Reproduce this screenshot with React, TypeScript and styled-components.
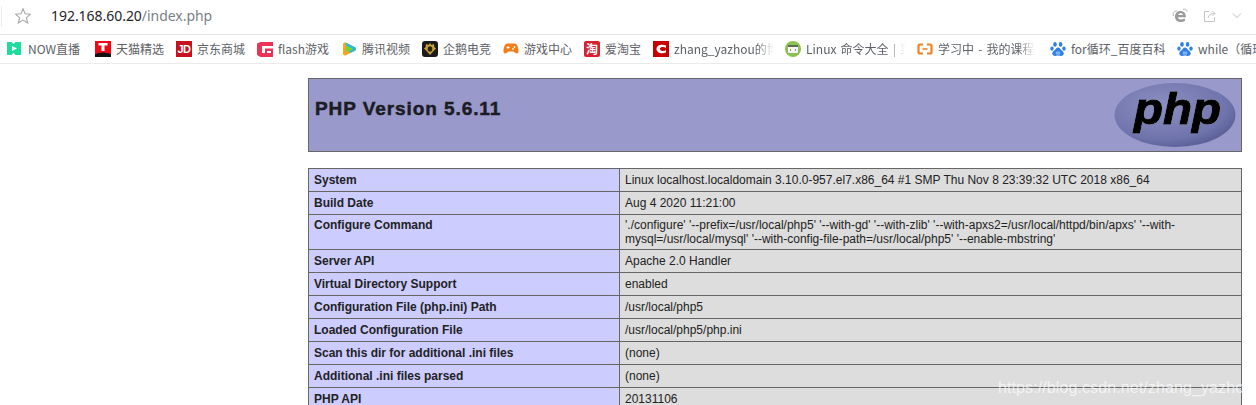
import React from "react";
import styled, { createGlobalStyle } from "styled-components";

const Global = createGlobalStyle`
  html, body { margin: 0; padding: 0; background: #fff; }
  body { width: 1256px; height: 405px; overflow: hidden; }
`;
const Page = styled.div`
  position: relative;
  width: 1256px;
  height: 405px;
  overflow: hidden;
  background: #fff;
`;
const AddressBar = styled.div`
  box-sizing: border-box;
  display: flex;
  align-items: center;
  padding: 0 0 0 1px;
  border-bottom: 1px solid #e3e3e3;
  height: 35px;
`;
const Divider = styled.div`
  width: 1px;
  height: 21px;
  background: #ececec;
  margin: -2px 13px 0 0;
`;
const StarBox = styled.div`
  width: 16px;
  height: 16px;
  display: flex;
  margin: -2px 20px 0 0;
`;
const Url = styled.div`
  font: 14px/20px "Noto Sans", "Liberation Sans", sans-serif;
  color: #7b7f86;
  letter-spacing: -0.04px;
  flex: 1;
  margin-top: -2px;
`;
const Host = styled.span`
  color: #1f2328;
`;
const Tools = styled.div`
  display: flex;
  align-items: center;
  gap: 15px;
  padding-right: 14px;
  margin-top: -3px;
`;
const BookmarkBar = styled.div`
  height: 29px;
  box-sizing: border-box;
  display: flex;
  align-items: center;
  padding-left: 7px;
  border-bottom: 1px solid #ebebeb;
  overflow: hidden;
`;
const Bookmark = styled.div<{ $w: number }>`
  flex: 0 0 ${(p) => p.$w}px;
  width: ${(p) => p.$w}px;
  display: flex;
  align-items: center;
  gap: 5px;
  overflow: hidden;
`;
const Label = styled.span<{ $fade?: number }>`
  font: 12px/16px "Noto Sans CJK SC", "Noto Sans", sans-serif;
  color: #5d6166;
  white-space: nowrap;
  word-spacing: 1.5px;
  ${(p) =>
    p.$fade
      ? `width: ${p.$fade}px; overflow: hidden; flex: none;
         -webkit-mask-image: linear-gradient(to right, #000 82%, transparent);
         mask-image: linear-gradient(to right, #000 82%, transparent);`
      : ""}
`;
const Main = styled.main`
  padding: 14px 14px 0 308px;
  display: flex;
  flex-direction: column;
  gap: 16px;
  font-family: "Liberation Sans", Arial, sans-serif;
`;
const Banner = styled.div`
  height: 74px;
  box-sizing: border-box;
  border: 1px solid #666;
  background: #9999cc;
  display: flex;
  justify-content: space-between;
  padding: 19px 5px 0 6px;
`;
const Title = styled.h1`
  margin: 0;
  font: bold 19px/22px "Liberation Sans", Arial, sans-serif;
  color: #1c1c24;
  letter-spacing: 0.92px;
  -webkit-text-stroke: 0.5px #1c1c24;
`;
const LogoBox = styled.div`
  margin-top: -16px;
  width: 122px;
  height: 66px;
`;
const InfoTable = styled.table`
  width: 934px;
  table-layout: fixed;
  border-collapse: collapse;
  font-size: 12px;
  color: #222;
`;
const KeyCell = styled.td<{ $tall: boolean }>`
  width: 311px;
  box-sizing: border-box;
  border: 1px solid #666;
  background: #ccccff;
  font-weight: bold;
  font-size: 12px;
  line-height: 14px;
  padding: ${(p) => (p.$tall ? "3px 5px" : "4px 5px 2px")};
  vertical-align: top;
`;
const ValueCell = styled.td`
  border: 1px solid #666;
  background: #dddddd;
  font-size: 12px;
  line-height: 14px;
  padding: 3px 5px;
  vertical-align: middle;
`;
const Row = styled.tr<{ $h: number }>`
  height: ${(p) => p.$h}px;
`;
const Watermark = styled.div`
  position: absolute;
  left: 998px;
  top: 378px;
  font: 16px/20px "Liberation Sans", Arial, sans-serif;
  letter-spacing: 0.1px;
  color: rgba(255, 255, 255, 0.66);
  white-space: nowrap;
`;
const LogoText = styled.text`
  font-family: "Liberation Sans", Arial, sans-serif;
  font-weight: bold;
  font-style: italic;
  font-size: 44px;
  fill: #000;
  stroke: #000;
  stroke-width: 1.1px;
  filter: drop-shadow(0.7px 0.7px 0 rgba(255, 255, 255, 0.85));
`;

const Ico: React.FC<{ children: React.ReactNode; size?: number }> = ({ children, size = 16 }) => (
  <svg width={size} height={size} viewBox="0 0 16 16" style={{ flex: "none" }}>
    {children}
  </svg>
);

const BaiduPaw = () => (
  <Ico>
    <g fill="#2f7fe8">
      <ellipse cx="5" cy="3.4" rx="1.8" ry="2.3" />
      <ellipse cx="10.6" cy="3.4" rx="1.8" ry="2.3" />
      <ellipse cx="2" cy="7.6" rx="1.7" ry="2.2" />
      <ellipse cx="14" cy="7.6" rx="1.7" ry="2.2" />
      <path d="M8 6.6c-2 0-2.3 2.2-4 3.2C2.4 10.8 2 12 2.4 13.3c.5 1.6 2.4 1.9 3.4 1.6 1.4-.4 3-.4 4.4 0 1 .3 2.9 0 3.4-1.6.4-1.3 0-2.5-1.6-3.5-1.7-1-2-3.200-4-3.200z" />
    </g>
    <path d="M5.800 10.500h4.400v3H5.800z" fill="#a9ccf5" opacity=".7" />
  </Ico>
);

const icons: Record<string, React.ReactNode> = {
  now: (
    <Ico>
      <path d="M0 1h4.500l2 2 2-2H14v13H8.500l-2-2-2 2H0z" fill="#1edc9c" />
      <path d="M5 5l5 2.500L5 10z" fill="#fff" />
    </Ico>
  ),
  tmall: (
    <Ico>
      <rect x="0" y="0" width="16" height="16" fill="#ec0a18" />
      <path d="M0 13q8-3 16 0v3H0z" fill="#111" />
      <path d="M3.500 2h9v2.600H9.500V10h-3V4.600h-3z" fill="#fff" />
    </Ico>
  ),
  jd: (
    <Ico>
      <rect x="0" y="0" width="16" height="16" fill="#c6121f" />
      <text x="8" y="12" textAnchor="middle" fontFamily="Liberation Sans" fontWeight="bold" fontSize="11" letterSpacing="-0.5" fill="#fff">JD</text>
    </Ico>
  ),
  flash: (
    <Ico>
      <path d="M0 2.500L3.500 1H16v4H5v7h3V7.500h8V16H3.500L0 14z" fill="#ea3455" />
      <path d="M10 10h4v2h-4z" fill="#fff" />
    </Ico>
  ),
  tencent: (
    <Ico>
      <path d="M2 3.500Q2 1 4.500 1.500L14 6.300Q16 8 14 9.700L4.500 14.500Q2 15 2 12.500z" fill="#f6a623" />
      <path d="M4.500 1.500L14 6.300Q16 8 14 9.700L9 12 5 4z" fill="#22b7ee" />
      <path d="M5 4.500L12.500 8 5 11.500z" fill="#7fd02c" />
    </Ico>
  ),
  penguin: (
    <Ico>
      <rect width="16" height="16" rx="3" fill="#1b1b1b" />
      <path d="M8 2l1.500 2 2.500-1 .3 3L14 7.500 11.500 10 8 14 4.500 10 2 7.500 3.700 6 4 3l2.500 1z" fill="#c9a13b" />
      <ellipse cx="8" cy="8" rx="2.300" ry="2.800" fill="#2a2412" />
    </Ico>
  ),
  game: (
    <Ico>
      <path d="M4.500 2.500h7c2.500 0 4 3.500 4 8 0 2-1.500 2.500-3 1.500L10.500 10.500h-5L3.500 12c-1.500 1-3 .5-3-1.500C.5 6 2 2.500 4.500 2.500z" fill="#f57c1a" />
      <path d="M3.500 6.500h3M5 5v3" stroke="#fff" strokeWidth="1" />
      <circle cx="11.500" cy="6" r=".9" fill="#fff" />
      <circle cx="10" cy="7.800" r=".9" fill="#fff" />
    </Ico>
  ),
  taobao: (
    <Ico>
      <rect width="16" height="16" rx="2" fill="#d8202f" />
      <text x="8" y="12.500" textAnchor="middle" fontFamily="Noto Sans CJK SC" fontWeight="bold" fontSize="12" fill="#fff">淘</text>
    </Ico>
  ),
  csdn: (
    <Ico>
      <rect width="16" height="16" fill="#c90000" />
      <path d="M13 4.500C9 2.800 3.500 4 3.500 8s5.500 5.200 9.500 3.500V9.300C10 10.500 7 10 7 8s3-2.500 6-1.300z" fill="#fff" />
    </Ico>
  ),
  linux: (
    <Ico>
      <circle cx="8" cy="8" r="8" fill="#8cc152" />
      <rect x="3" y="4" width="10" height="8" rx="1" fill="#f4f4f4" />
      <rect x="3" y="4" width="10" height="2" fill="#5d6b57" />
      <path d="M6 8l-1 1 1 1M10 8l1 1-1 1" stroke="#5d6b57" strokeWidth=".7" fill="none" />
    </Ico>
  ),
  imooc: (
    <Ico>
      <path d="M6 3.500H3Q1.500 3.500 1.500 5v6Q1.500 12.500 3 12.500h3M10 3.500h3q1.500 0 1.500 1.500v6q0 1.500-1.500 1.500h-3" stroke="#f4801f" strokeWidth="2.200" fill="none" />
      <path d="M5.500 8h5" stroke="#f4801f" strokeWidth="1.600" />
    </Ico>
  ),
  baidu: <BaiduPaw />,
};

const bookmarks: { icon: string; text: string; w: number; fade?: number }[] = [
  { icon: "now", text: "NOW直播", w: 88 },
  { icon: "tmall", text: "天猫精选", w: 81 },
  { icon: "jd", text: "京东商城", w: 81 },
  { icon: "flash", text: "flash游戏", w: 84 },
  { icon: "tencent", text: "腾讯视频", w: 81 },
  { icon: "penguin", text: "企鹅电竞", w: 81 },
  { icon: "game", text: "游戏中心", w: 81 },
  { icon: "taobao", text: "爱淘宝", w: 69 },
  { icon: "csdn", text: "zhang_yazhou的博客", w: 132, fade: 100 },
  { icon: "linux", text: "Linux 命令大全 | 菜鸟教程", w: 132, fade: 99 },
  { icon: "imooc", text: "学习中 - 我的课程表", w: 133, fade: 97 },
  { icon: "baidu", text: "for循环_百度百科", w: 127 },
  { icon: "baidu", text: "while（循环语句）", w: 80 },
];

const rows: { k: string; v: string; h: number }[] = [
  { k: "System", v: "Linux localhost.localdomain 3.10.0-957.el7.x86_64 #1 SMP Thu Nov 8 23:39:32 UTC 2018 x86_64", h: 23 },
  { k: "Build Date", v: "Aug 4 2020 11:21:00", h: 23 },
  {
    k: "Configure Command",
    v: "'./configure' '--prefix=/usr/local/php5' '--with-gd' '--with-zlib' '--with-apxs2=/usr/local/httpd/bin/apxs' '--with-mysql=/usr/local/mysql' '--with-config-file-path=/usr/local/php5' '--enable-mbstring'",
    h: 35,
  },
  { k: "Server API", v: "Apache 2.0 Handler", h: 23 },
  { k: "Virtual Directory Support", v: "enabled", h: 23 },
  { k: "Configuration File (php.ini) Path", v: "/usr/local/php5", h: 23 },
  { k: "Loaded Configuration File", v: "/usr/local/php5/php.ini", h: 23 },
  { k: "Scan this dir for additional .ini files", v: "(none)", h: 23 },
  { k: "Additional .ini files parsed", v: "(none)", h: 23 },
  { k: "PHP API", v: "20131106", h: 23 },
];

const PhpLogo = () => (
  <svg width="122" height="66" viewBox="0 0 122 66">
    <defs>
      <radialGradient id="phpg" cx="0.4" cy="0.35" r="0.75">
        <stop offset="0" stopColor="#8b8fc0" />
        <stop offset="0.7" stopColor="#7074ad" />
        <stop offset="1" stopColor="#52568f" />
      </radialGradient>
    </defs>
    <ellipse cx="61" cy="33" rx="60.500" ry="32" fill="url(#phpg)" />
    <LogoText x="20" y="42" textLength="87" lengthAdjust="spacingAndGlyphs">
      php
    </LogoText>
  </svg>
);

export default function App() {
  return (
    <Page>
      <Global />
      <AddressBar>
        <Divider />
        <StarBox>
          <svg width="16" height="16" viewBox="0 0 16 16">
            <path d="M8 .8l2.100 5 5.400.4-4.100 3.500 1.300 5.300L8 12.100 3.300 15l1.300-5.300L.5 6.200l5.400-.4z" fill="none" stroke="#a8a8a8" strokeWidth="1.100" />
          </svg>
        </StarBox>
        <Url>
          <Host>192.168.60.20</Host>/index.php
        </Url>
        <Tools>
          <svg width="16" height="16" viewBox="0 0 16 16">
            <path d="M3 8.500C3 5 5.500 3 8.500 3S14 5 14 9.200H6c.2 2.600 4 3 6.500 1l.8 2.600C9 15.500 3 14 3 8.500zM6.200 7H11c-.2-2.300-4.500-2.300-4.800 0z" fill="#9b9b9b" />
            <path d="M5 3C2 3 .5 5 1.500 8M11 1.500c2.500-1 4 0 4 2" stroke="#b5b5b5" strokeWidth="1" fill="none" />
          </svg>
          <svg width="14" height="14" viewBox="0 0 14 14">
            <path d="M6 2.500H1.500v10h10V8" stroke="#c2c2c2" strokeWidth="1" fill="none" />
            <path d="M5 9c.5-3 3-4.500 6.500-4.500M9.500 2l2.500 2.500L9.500 7" stroke="#c2c2c2" strokeWidth="1" fill="none" />
          </svg>
          <svg width="10" height="8" viewBox="0 0 10 8">
            <path d="M1 1.500l4 4 4-4" stroke="#bcbcbc" strokeWidth="1" fill="none" />
          </svg>
        </Tools>
      </AddressBar>
      <BookmarkBar>
        {bookmarks.map((b, i) => (
          <Bookmark key={i} $w={b.w}>
            {icons[b.icon]}
            <Label $fade={b.fade}>{b.text}</Label>
          </Bookmark>
        ))}
      </BookmarkBar>
      <Main>
        <Banner>
          <Title>PHP Version 5.6.11</Title>
          <LogoBox>
            <PhpLogo />
          </LogoBox>
        </Banner>
        <InfoTable>
          <tbody>
            {rows.map((r) => (
              <Row key={r.k} $h={r.h}>
                <KeyCell $tall={r.h > 23}>{r.k}</KeyCell>
                <ValueCell>{r.v}</ValueCell>
              </Row>
            ))}
          </tbody>
        </InfoTable>
      </Main>
      <Watermark>https://blog.csdn.net/zhang_yazhou</Watermark>
    </Page>
  );
}
